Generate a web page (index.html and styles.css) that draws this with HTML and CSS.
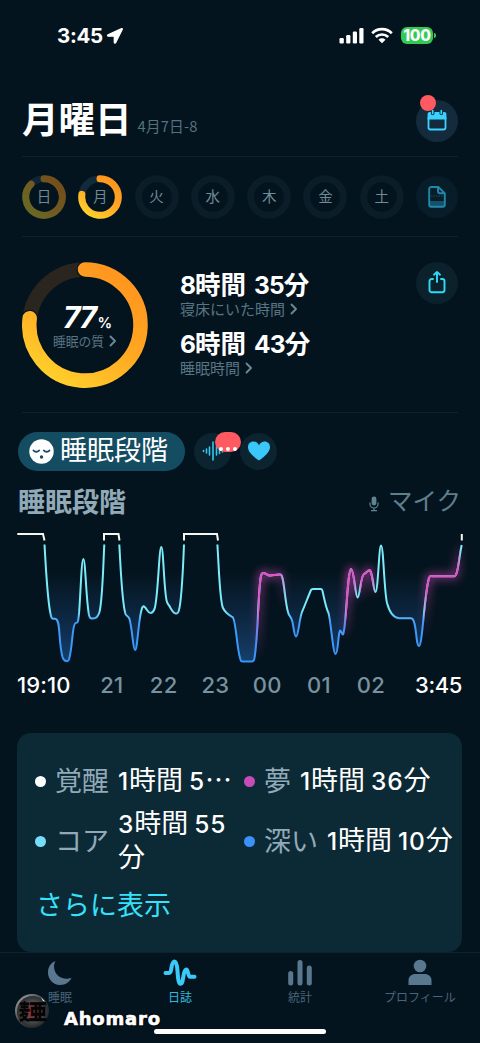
FILE: index.html
```html
<!DOCTYPE html>
<html lang="ja">
<head>
<meta charset="utf-8">
<title>睡眠日誌</title>
<link rel="stylesheet" href="styles.css">
</head>
<body>
<div class="app">
  <div class="status">
    <div class="clock"><span>3:45</span>
      <svg width="18" height="18" viewBox="0 0 18 18"><path d="M15.600 1.600 2 7.800c-.8.500-.6 1.400.3 1.400h6v6c0 .9 1 1.200 1.400.3L16.300 2.200c.2-.5-.2-.8-.7-.6Z" fill="#fff" stroke="#fff" stroke-width="1.300" stroke-linejoin="round"/></svg>
    </div>
    <div class="signals">
      <svg width="26" height="18" viewBox="0 0 26 18" fill="#fff"><rect x=".5" y="11" width="4.300" height="5.500" rx="1.200"/><rect x="7.200" y="8" width="4.200" height="8.500" rx="1.200"/><rect x="13.800" y="4.500" width="4.200" height="12" rx="1.200"/><rect x="20.300" y="1" width="4.200" height="15.500" rx="1.200"/></svg>
      <svg class="wifi" width="22" height="18" viewBox="0 0 22 18" fill="none" stroke="#fff" stroke-width="2.700"><path d="M1.200 6.200a14 14 0 0 1 19.600 0M4.800 10a9 9 0 0 1 12.400 0"/><path d="m11 16.200-3.500-3.500a5.100 5.100 0 0 1 7 0Z" fill="#fff" stroke="none"/></svg>
      <span class="battery">100</span><i class="battery-tip"></i>
    </div>
  </div>

  <header class="header">
    <h1>月曜日</h1><span class="date">4月7日-8</span>
    <div class="round calendar">
      <svg width="22" height="24" viewBox="0 0 22 24"><path d="M2.500 8v10.500a2 2 0 0 0 2 2h13a2 2 0 0 0 2-2V8" fill="none" stroke="#3ad3ff" stroke-width="1.800"/><path d="M1.600 10.600V5.200c0-1.400.9-2.200 2.200-2.200h1.100v1.500a1.800 1.800 0 0 0 3.600 0V3h5v1.500a1.800 1.800 0 0 0 3.600 0V3h1.100c1.300 0 2.200.8 2.200 2.200v5.400Z" fill="#3ad3ff"/><path d="M6.700 1.500v3M15.300 1.500v3" stroke="#3ad3ff" stroke-width="1.700" stroke-linecap="round"/></svg>
      <i class="dot"></i>
    </div>
  </header>

  <svg width="0" height="0" class="defs"><defs>
    <linearGradient id="gold" x1=".8" y1="0" x2=".2" y2="1"><stop offset="0" stop-color="#ff951e"/><stop offset=".5" stop-color="#ffa722"/><stop offset="1" stop-color="#ffd02c"/></linearGradient>
    <linearGradient id="olive" x1="1" y1="0" x2="0" y2=".8"><stop offset="0" stop-color="#754c18"/><stop offset=".5" stop-color="#715820"/><stop offset="1" stop-color="#696923"/></linearGradient>
  </defs></svg>

  <div class="week">
    <div class="day"><svg viewBox="0 0 44 44"><circle cx="22" cy="22" r="18.300" stroke="#0e2635"/><path d="M22 3.700A18.300 18.300 0 1 1 9.100 9.100" stroke="url(#olive)"/></svg><span>日</span></div>
    <div class="day"><svg viewBox="0 0 44 44"><circle cx="22" cy="22" r="18.300" stroke="#122a3c"/><path d="M22 3.700A18.300 18.300 0 1 1 3.900 19.400" stroke="url(#gold)"/></svg><span>月</span></div>
    <div class="day"><svg viewBox="0 0 44 44"><circle cx="22" cy="22" r="18.300"/></svg><span>火</span></div>
    <div class="day"><svg viewBox="0 0 44 44"><circle cx="22" cy="22" r="18.300"/></svg><span>水</span></div>
    <div class="day"><svg viewBox="0 0 44 44"><circle cx="22" cy="22" r="18.300"/></svg><span>木</span></div>
    <div class="day"><svg viewBox="0 0 44 44"><circle cx="22" cy="22" r="18.300"/></svg><span>金</span></div>
    <div class="day"><svg viewBox="0 0 44 44"><circle cx="22" cy="22" r="18.300"/></svg><span>土</span></div>
    <div class="round note">
      <svg width="18" height="22" viewBox="0 0 18 22"><path d="M1.200 15h15.600v4.200a2 2 0 0 1-2 2H3.200a2 2 0 0 1-2-2Z" fill="#175069"/><path d="M10.300 1H3.200a2 2 0 0 0-2 2v15.800a2 2 0 0 0 2 2h11.600a2 2 0 0 0 2-2V7.300ZM10 1v4.300a2 2 0 0 0 2 2h4.500" fill="none" stroke="#2387a8" stroke-width="1.900"/><path d="M3 10h12" stroke="#175069" stroke-width="1" stroke-dasharray="1.500 1"/></svg>
    </div>
  </div>

  <section class="summary">
    <div class="quality">
      <svg viewBox="0 0 126 126" fill="none" stroke-width="14.500"><circle cx="63" cy="63" r="55.600" stroke="#2a261f"/><g stroke-linecap="round"><path d="M63 7.400A55.600 55.600 0 1 1 7.700 56.300" stroke="#04141e" stroke-width="17"/><path d="M63 7.400A55.600 55.600 0 1 1 7.700 56.300" stroke="url(#gold)" stroke-width="14.500"/></g></svg>
      <div class="score"><div class="pct"><b>77</b><span>%</span></div><div class="sub">睡眠の質<svg class="chev" viewBox="0 0 8 12"><path d="m1.500 1.500 4.500 4.500-4.500 4.500"/></svg></div></div>
    </div>
    <div class="times">
      <div class="big"><b>8</b>時間<b class="gap">35</b>分</div>
      <div class="sub">寝床にいた時間<svg class="chev" viewBox="0 0 8 12"><path d="m1.500 1.500 4.500 4.500-4.500 4.500"/></svg></div>
      <div class="big second"><b>6</b>時間<b class="gap">43</b>分</div>
      <div class="sub">睡眠時間<svg class="chev" viewBox="0 0 8 12"><path d="m1.500 1.500 4.500 4.500-4.500 4.500"/></svg></div>
    </div>
    <div class="round share">
      <svg width="20" height="26" viewBox="0 0 20 26" fill="none" stroke="#2ddcfa" stroke-width="1.900" stroke-linecap="round" stroke-linejoin="round"><path d="M6 9H4.700A2.200 2.200 0 0 0 2.500 11.200v8.800a2.200 2.200 0 0 0 2.200 2.200h10.600a2.200 2.200 0 0 0 2.200-2.200v-8.800A2.200 2.200 0 0 0 15.300 9H14M10 12V2.500M7 4.700 10 1.900l3 2.800"/></svg>
    </div>
  </section>

  <div class="tabs">
    <div class="pill">
      <svg width="25" height="25" viewBox="0 0 25 25"><circle cx="12.500" cy="12.500" r="12.200" fill="#fff"/><path d="M4.500 11.500c1.400 1.700 4.200 1.700 5.600 0M14.900 11.500c1.400 1.700 4.200 1.700 5.600 0" fill="none" stroke="#144c62" stroke-width="1.900" stroke-linecap="round"/><circle cx="12.500" cy="18" r="1.700" fill="#144c62"/></svg>
      <span>睡眠段階</span>
    </div>
    <div class="chip"><svg width="22" height="22" viewBox="0 0 22 22" stroke="#32c8f2" stroke-width="1.600" stroke-linecap="round"><path d="M1.500 10.500v1M4.500 9v4M7.500 7v8M11 2v18M14.500 7v8M17.500 8.500v5M20.500 10v2"/></svg><span class="bubble"><i></i><i></i><i></i></span></div>
    <div class="chip"><svg width="24" height="22" viewBox="0 0 24 22"><path d="M12 20.500C8.600 18 1 12.800 1 7.200 1 3.700 3.400 1.500 6.300 1.500c2.300 0 4.500 1.300 5.700 3.700 1.200-2.400 3.400-3.700 5.700-3.700C20.600 1.500 23 3.700 23 7.200 23 12.800 15.400 18 12 20.500Z" fill="#3ac8fc"/></svg></div>
  </div>

  <div class="chart-head">
    <h2>睡眠段階</h2>
    <div class="mic"><svg width="10" height="16" viewBox="0 0 10 16"><rect x="2.600" y=".5" width="4.800" height="9" rx="2.400" fill="#5f8391"/><path d="M1 6.500V8a4 4 0 0 0 8 0V6.500M5 12v2.500M2 14.700h6" fill="none" stroke="#5f8391" stroke-width="1.200"/></svg><span>マイク</span></div>
  </div>

  <svg class="chart" viewBox="0 522 480 148" width="480" height="148">
    <defs>
      <linearGradient id="line" gradientUnits="userSpaceOnUse" x1="0" y1="544" x2="0" y2="662"><stop offset="0" stop-color="#7ceefa"/><stop offset=".56" stop-color="#78eafa"/><stop offset=".66" stop-color="#429bfa"/><stop offset="1" stop-color="#3894fa"/></linearGradient>
      <linearGradient id="area" gradientUnits="userSpaceOnUse" x1="0" y1="572" x2="0" y2="662"><stop offset="0" stop-color="#12345a" stop-opacity="0"/><stop offset=".5" stop-color="#12345a" stop-opacity=".6"/><stop offset="1" stop-color="#15406c"/></linearGradient>
      <linearGradient id="dream" gradientUnits="userSpaceOnUse" x1="0" y1="0" x2="480" y2="0"><stop offset=".534" stop-color="#e64fc6" stop-opacity="0"/><stop offset=".539" stop-color="#e64fc6"/><stop offset=".582" stop-color="#e64fc6"/><stop offset=".596" stop-color="#e64fc6" stop-opacity="0"/><stop offset=".717" stop-color="#e64fc6" stop-opacity="0"/><stop offset=".722" stop-color="#e64fc6"/><stop offset=".737" stop-color="#e64fc6"/><stop offset=".743" stop-color="#e64fc6" stop-opacity="0"/><stop offset=".748" stop-color="#e64fc6" stop-opacity="0"/><stop offset=".753" stop-color="#e64fc6"/><stop offset=".774" stop-color="#e64fc6"/><stop offset=".782" stop-color="#e64fc6" stop-opacity="0"/><stop offset=".882" stop-color="#e64fc6" stop-opacity="0"/><stop offset=".889" stop-color="#e64fc6"/><stop offset=".954" stop-color="#e64fc6"/><stop offset=".960" stop-color="#e64fc6" stop-opacity="0"/></linearGradient>
      <filter id="glow" x="-10%" y="-30%" width="120%" height="160%"><feGaussianBlur stdDeviation="4"/></filter>
      <path id="night-a" d="M44.500 544.500C46 570 47.500 603 51 616C51.700 619 52.500 618.800 55 618.800C61 619 58 640 62.500 657C64 662 68 662 69 659.500C73 645 72 625 75.500 623C78.500 623 78 621 79 614C80.500 596 81.500 559 83.300 559C85.500 559 86 600 89 615C89.700 618.500 91 618.500 93 618.500C96 618.500 98 617.500 99.500 612C102.500 600 103 570 104.300 544.500"/>
      <path id="night-b" d="M119.300 544.500C121 574 122 603 125.500 614C126.500 616.500 128 615.500 129.500 619C132.500 630 133 650 135 650C137.500 650 138 623 141.500 610C143 604 145 606.500 147 610C149.500 614 152 614.500 154.500 609C158 600 159 547 161.300 547C163.500 547 164 594 167 602C168 605 169 604.500 170.500 608C174 614 177 615.500 178.700 611C181.500 603 183 570 184 544.500"/>
      <path id="night-c" d="M217.400 544.500C219.500 580 220 602 223 608C226 614 229 615 232.500 617C236 620 236.500 646 240 658C241 661.500 241 661.500 243 661.500H252C254 661.500 254 660 254.500 658C258 638 258 590 261 576C262 571 265 573.500 268 575C271 576.500 276 574 280 574.500C284 573 284.500 600 288 612C289 617 291 615 292.500 622C294 630 294.500 636.500 296 636.500C298.500 636.500 299 620 302 612C305 605 308 597 311 590Q311.500 589 313 589H321Q322 589 322.500 591C325 602 326 608 328.500 613C331 622 333 654 335.500 654C338 654 338 637 339.500 632C340.500 628 341.500 634 343 634.500C346 630 347.500 570 351 569C354 569 355.500 597.500 357.500 597.500C360 597.500 360.500 576 364 574C367 573 368 569.500 370 570.500C373 574 373.500 592 375.500 592C378 592 379 545.500 381 545.500C383.500 545.500 384 590 387 603C390 614 394 618 399 618.200H411C417 618.200 415.500 646 419 646C422.500 646 424 596 429 578C430 575.500 430.500 576 432 576.200H454C458 577 459 557 461.700 545"/>
    </defs>
    <g fill="url(#area)"><use href="#night-a"/><use href="#night-b"/><use href="#night-c"/></g>
    <g fill="none" stroke-width="2" stroke-linejoin="round">
      <use href="#night-c" stroke="url(#dream)" stroke-width="6" filter="url(#glow)" opacity=".55"/>
      <g stroke="url(#line)"><use href="#night-a"/><use href="#night-b"/><use href="#night-c"/></g>
      <use href="#night-c" stroke="url(#dream)"/>
    </g>
    <path d="M17.300 534H43L44.500 540.500M104 540.500V534H118.500L119.500 540.500M184 540.500V534H217L218 540.500M461.800 534V540.500" fill="none" stroke="#f6f8f0" stroke-width="2"/>
  </svg>

  <div class="axis"><b>19:10</b><span>21</span><span>22</span><span>23</span><span>00</span><span>01</span><span>02</span><b>3:45</b></div>

  <section class="card">
    <div class="legend">
      <div class="item"><i class="white"></i><span class="name">覚醒</span><span class="val"><b>1</b>時間 <b>5</b>⋯</span></div>
      <div class="item"><i class="pink"></i><span class="name">夢</span><span class="val"><b>1</b>時間 <b>36</b>分</span></div>
      <div class="item"><i class="cyan"></i><span class="name">コア</span><span class="val"><b>3</b>時間 <b>55</b><br>分</span></div>
      <div class="item"><i class="blue"></i><span class="name">深い</span><span class="val"><b>1</b>時間 <b>10</b>分</span></div>
    </div>
    <a class="more">さらに表示</a>
  </section>

  <nav class="nav">
    <div><svg width="26" height="26" viewBox="0 0 26 26"><path d="M8.500 1C3.800 3 1 6.800 1 12.500 1 19 6 25 13 25c5.500 0 9.500-2.500 11.500-7.200-2 .8-3.500 1-5 1C12.500 18.800 7 13.500 7 6.500c0-2 .5-3.800 1.500-5.500Z" fill="#597890"/></svg><span>睡眠</span></div>
    <div class="on"><svg width="34" height="28" viewBox="0 0 34 28"><path d="M2.500 14h3.200c2 0 2-1.500 2.800-5.500C9.300 4 10 2.600 11.500 2.600s2.500 2 3 9.400c.5 7.500 1 12.800 3 12.800s2.300-4 3-8c.7-4.500 1.400-6.300 3-6.300s1.500 7.300 3.500 7.300h4.500" fill="none" stroke="#3acafa" stroke-width="4" stroke-linecap="round" stroke-linejoin="round"/></svg><span>日誌</span></div>
    <div><svg width="26" height="28" viewBox="0 0 26 28" fill="#597890"><rect x="1.200" y="12" width="5" height="14.500" rx="2.500"/><rect x="10.500" y="1" width="5" height="25.500" rx="2.500"/><rect x="19.800" y="6.500" width="5" height="20" rx="2.500"/></svg><span>統計</span></div>
    <div><svg width="26" height="28" viewBox="0 0 26 28" fill="#597890"><circle cx="13" cy="7" r="6.300"/><path d="M1.500 26v-4.500c0-4 3-6.500 7-6.500h9c4 0 7 2.500 7 6.500V26Z"/></svg><span>プロフィール</span></div>
  </nav>
  <div class="home"></div>
  <div class="watermark">
    <svg width="36" height="36" viewBox="0 0 36 36"><defs><linearGradient id="rim" x1="0" y1="0" x2="1" y2="1"><stop offset="0" stop-color="#b0b4b6"/><stop offset=".45" stop-color="#46494b"/><stop offset="1" stop-color="#111"/></linearGradient><radialGradient id="core"><stop offset="0" stop-color="#d32b3a"/><stop offset=".35" stop-color="#7a3a42"/><stop offset=".65" stop-color="#4a4d50"/><stop offset="1" stop-color="#2a2c2e"/></radialGradient></defs><circle cx="18" cy="18" r="17" fill="url(#rim)"/><circle cx="18.500" cy="18.500" r="15.500" fill="url(#core)"/><path d="M27 4.500l4 4-2-.5Z" fill="#fff"/><g class="seal"><text x="5" y="26" textLength="11" lengthAdjust="spacingAndGlyphs">麦</text><text x="15" y="26" textLength="18" lengthAdjust="spacingAndGlyphs">亜</text></g></svg>
    <span>Ahomaro</span>
  </div>
</div>
</body>
</html>
```

FILE: styles.css
```css
* { box-sizing: border-box; margin: 0; }
body { background: #04141e; font-family: "Noto Sans CJK JP", sans-serif; color: #fff; }
svg { display: block; flex: none; }
.defs { position: absolute; }
.app { position: relative; width: 480px; height: 1043px; overflow: hidden; display: flex; flex-direction: column; }
.status { height: 71px; flex: none; padding: 0 44px 0 57px; display: flex; justify-content: space-between; align-items: center; }
.clock, .signals { display: flex; align-items: center; }
.clock { font: 700 20.500px/24px Inter, sans-serif; gap: 3px; letter-spacing: -.3px; }
.signals { gap: 6px; }
.battery { width: 32px; height: 17px; border-radius: 6px; background: #31ca55; font: 800 15.500px/17px Inter, sans-serif; text-align: center; letter-spacing: -.3px; margin-left: 2px; }
.battery-tip { width: 2px; height: 5px; border-radius: 0 2px 2px 0; background: #31ca55; margin-left: -5px; }
.header { height: 86px; flex: none; margin: 0 22px; border-bottom: 1px solid #0d222d; display: flex; align-items: flex-end; position: relative; padding-bottom: 14px; }
h1 { font-size: 36.500px; font-weight: 700; line-height: 44px; margin-bottom: 2px; }
.date { color: #53717f; font-size: 14.800px; font-weight: 400; line-height: 22px; letter-spacing: .1px; margin: 0 0 5px 6px; }
.round { width: 42px; height: 42px; border-radius: 50%; background: #0b222d; display: flex; align-items: center; justify-content: center; position: relative; }
.calendar { margin-left: auto; background: #132b3c; }
.dot { position: absolute; left: 4px; top: -5px; width: 16px; height: 16px; border-radius: 50%; background: #ff5962; }
.week { height: 80px; flex: none; margin: 0 22px; border-bottom: 1px solid #0d222d; display: flex; align-items: center; gap: 12.400px; }
.day { width: 44px; height: 44px; position: relative; display: flex; align-items: center; justify-content: center; color: #708a98; font-size: 14.500px; font-weight: 400; line-height: 22px; }
.day svg { position: absolute; inset: 0; width: 44px; height: 44px; fill: none; stroke: #0a1d29; stroke-width: 7; stroke-linecap: round; }
.day span { position: relative; margin-bottom: 2px; }
.note { background: #071d2a; margin-left: auto; }
.summary { height: 176px; flex: none; margin: 0 22px; border-bottom: 1px solid #0d222d; display: flex; padding-top: 25px; }
.quality { width: 126px; height: 126px; position: relative; }
.quality > svg { width: 126px; height: 126px; }
.score { position: absolute; inset: 41px 0 0 0; display: flex; flex-direction: column; align-items: center; }
.pct { display: flex; align-items: baseline; height: 28px; line-height: 28px; font-family: Inter, sans-serif; padding-left: 5px; }
.pct b { font-size: 30px; font-style: italic; letter-spacing: -1.500px; }
.pct span { font-size: 14.500px; font-weight: 600; margin-left: 2px; }
.sub { display: flex; align-items: center; color: #587583; font-size: 15px; line-height: 20px; font-weight: 400; }
.score .sub { font-size: 12.800px; }
.chev { width: 8px; height: 12px; margin-left: 5px; fill: none; stroke: #6b8896; stroke-width: 1.900; stroke-linecap: round; stroke-linejoin: round; }
.times { margin: 7px 0 0 32px; }
.big { display: flex; align-items: baseline; font-size: 25.500px; line-height: 28px; font-weight: 700; height: 30px; }
.big b { font: 700 24.500px/28px Inter, sans-serif; letter-spacing: -.9px; }
.big .gap { margin-left: 8px; }
.big.second { margin-top: 9px; }
.share { margin-left: auto; }
.share svg { margin-bottom: 1px; }
.tabs { height: 40px; flex: none; margin: 18px 0 0 18px; display: flex; align-items: center; gap: 9px; }
.pill { width: 167px; height: 39px; border-radius: 20px; background: #144c62; display: flex; align-items: center; padding-left: 11px; gap: 6px; font-size: 27px; line-height: 36px; font-weight: 400; }
.pill span { margin-bottom: 4px; }
.chip { width: 37px; height: 37px; border-radius: 50%; background: #0b2430; display: flex; align-items: center; justify-content: center; position: relative; }
.bubble { position: absolute; left: 21px; top: -1px; width: 26px; height: 20px; border-radius: 10px; background: #ff5962; display: flex; align-items: flex-end; justify-content: center; gap: 3px; padding-bottom: 1px; }
.bubble i { width: 4px; height: 4px; border-radius: 50%; background: #fff; }
.chart-head { height: 51px; flex: none; margin: 0 19px 0 18px; display: flex; align-items: center; justify-content: space-between; padding-top: 9px; }
h2 { font-size: 27px; line-height: 36px; font-weight: 700; color: #91aab8; }
.mic { display: flex; align-items: center; gap: 9px; color: #5f7f8c; font-size: 24.500px; line-height: 34px; font-weight: 400; }
.mic svg { margin-top: 5px; }
.mic span { margin-bottom: 2px; }
.axis { height: 30px; flex: none; margin: 0 18px 0 17px; display: grid; grid-template-columns: 69px repeat(6, 51.800px) 1fr; align-items: center; text-align: center; font: 500 22px/30px Inter, sans-serif; color: #78929f; letter-spacing: .3px; white-space: nowrap; }
.axis b { color: #fff; font-weight: 500; letter-spacing: -.4px; text-align: right; }
.axis b:first-child { letter-spacing: .1px; text-align: left; }
.card { width: 445px; height: 219px; flex: none; margin: 33px 0 0 17px; border-radius: 14px; background: #0c2936; padding: 15px 0 0 18px; }
.legend { display: grid; grid-template-columns: 209px 218px; grid-template-rows: 66px 54px; align-items: center; }
.item { display: flex; align-items: center; font-size: 27px; line-height: 34px; white-space: nowrap; font-weight: 400; }
.item i { width: 11px; height: 11px; flex: none; border-radius: 50%; margin-right: 9px; }
.white { background: #fff; }
.pink { background: #c64db9; }
.cyan { background: #76ddf9; }
.blue { background: #3991fa; }
.name { color: #91aab8; margin: 0 9px 3px 0; }
.val { font-size: 27px; font-weight: 400; margin-bottom: 4px; }
.val b { font: 500 24.500px/30px Inter, sans-serif; letter-spacing: .8px; }
.more { display: block; margin: 19px 0 0 1px; color: #36e2fb; font-size: 27px; line-height: 34px; font-weight: 400; }
.nav { height: 92px; flex: none; display: grid; grid-template-columns: repeat(4, 1fr); border-top: 1px solid #0d222d; padding-top: 6px; }
.nav div { display: flex; flex-direction: column; align-items: center; color: #48647a; font-size: 12px; line-height: 18px; }
.nav svg { height: 28px; }
.nav span { margin-top: 1px; }
.nav .on { color: #35b8df; }
.home { position: absolute; left: 154px; top: 1029px; width: 172px; height: 5px; border-radius: 3px; background: #fff; }
.watermark { position: absolute; left: 14px; top: 993px; display: flex; }
.watermark span { margin: 14px 0 0 14px; font: 700 18px/24px "DejaVu Sans", sans-serif; letter-spacing: .8px; -webkit-text-stroke: .6px #fff; text-shadow: 1px 1px 1px #000, -1px -1px 1px #000, 0 0 2px #000; }
.seal { font: 900 21px/21px "Noto Sans CJK JP", sans-serif; fill: #050505; stroke: #050505; stroke-width: .3px; }
```
